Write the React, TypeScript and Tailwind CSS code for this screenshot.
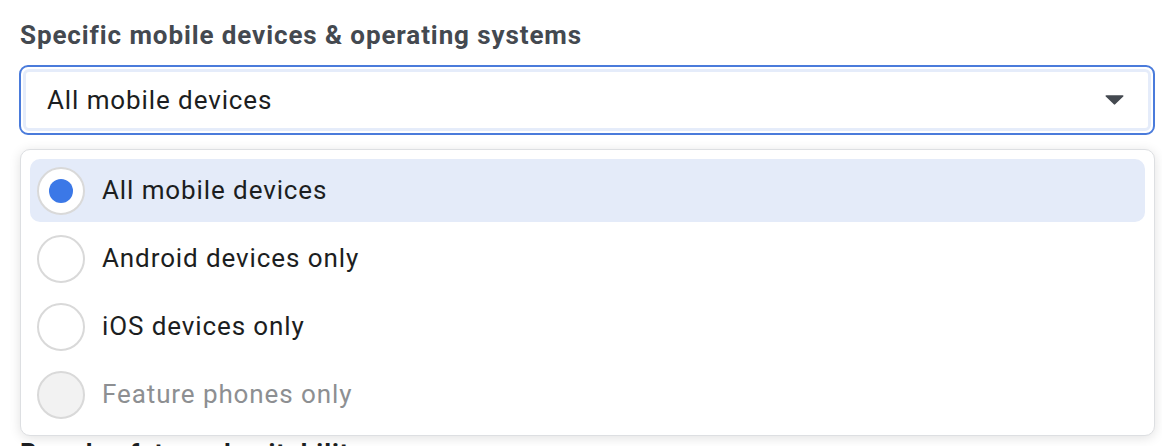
import React from "react";

const options = [
  { label: "All mobile devices", selected: true, disabled: false },
  { label: "Android devices only", selected: false, disabled: false },
  { label: "iOS devices only", selected: false, disabled: false },
  { label: "Feature phones only", selected: false, disabled: true },
];

export default function App() {
  return (
    <div
      className="w-[1162px] h-[446px] overflow-hidden bg-white tracking-[0.9px]"
      style={{ fontFamily: "Roboto, 'Liberation Sans', sans-serif" }}
    >
      <div className="pl-[20px] pr-[7px] pt-[20px]">
        <div className="text-[26px] leading-[30px] font-bold text-[#444950]">
          Specific mobile devices &amp; operating systems
        </div>
        <div className="mt-[15px] h-[70px] rounded-[9px] border-2 border-[#4a7bdb] p-[2px] -ml-[1px]">
          <div className="h-full rounded-[6px] border-[3px] border-[#e5ecfa] flex items-center pl-[21px] pr-[24px] bg-white">
            <span className="flex-1 text-[26px] text-[#1c1e21]">All mobile devices</span>
            <svg width="19" height="10" viewBox="0 0 19 10">
              <path d="M0.5 1.2 Q0.2 0.3 1.5 0.3 L17.5 0.3 Q18.8 0.3 18.5 1.2 L10.2 9.3 Q9.5 10 8.8 9.3 Z" fill="#444950" />
            </svg>
          </div>
        </div>
        <div className="mt-[14px] rounded-[10px] border border-[#dddfe2] bg-white shadow-[0_2px_12px_rgba(0,0,0,0.12)] p-[9px] flex flex-col gap-[5px]">
          {options.map((o) => (
            <div
              key={o.label}
              className={
                "h-[63px] rounded-[10px] flex items-center pl-[7px] " +
                (o.selected ? "bg-[#e4ebf9]" : "")
              }
            >
              <div
                className={
                  "w-[48px] h-[48px] rounded-full border-2 border-[#d9d9d9] flex items-center justify-center " +
                  (o.disabled ? "bg-[#f2f2f2]" : "bg-white")
                }
              >
                {o.selected && <div className="w-[24px] h-[24px] rounded-full bg-[#3b78e7]" />}
              </div>
              <span
                className={
                  "ml-[17px] text-[26px] " + (o.disabled ? "text-[#8d8f92]" : "text-[#1c1e21]")
                }
              >
                {o.label}
              </span>
            </div>
          ))}
        </div>
        <div className="mt-[2px] text-[26px] leading-[30px] font-bold text-[#1c1e21]">
          Brand safety and suitability
        </div>
      </div>
    </div>
  );
}
